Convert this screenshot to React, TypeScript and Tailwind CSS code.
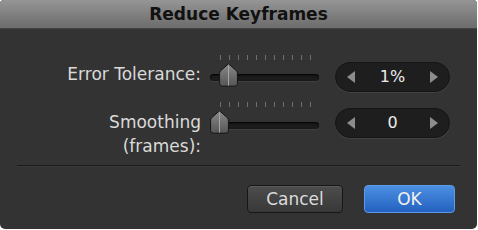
const font = { fontFamily: '"DejaVu Sans", Verdana, sans-serif' };

const ticks = Array.from({ length: 11 }, (_, i) => i);

function Thumb() {
  return (
    <svg width="19" height="24" viewBox="0 0 19 24">
      <defs>
        <linearGradient id="tg" x1="0" y1="0" x2="0" y2="1">
          <stop offset="0" stopColor="#8a8a8a" />
          <stop offset="1" stopColor="#555" />
        </linearGradient>
      </defs>
      <path d="M9.5 0.8 L17.6 8 Q18.4 8.8 18.4 10 L18.4 20.5 Q18.4 23.2 15.8 23.2 L3.2 23.2 Q0.6 23.2 0.6 20.5 L0.6 10 Q0.6 8.8 1.4 8 Z" fill="url(#tg)" stroke="#151515" strokeWidth="1" />
      <line x1="9.5" y1="2.5" x2="9.5" y2="22.5" stroke="#a5a5a5" strokeWidth="1" />
    </svg>
  );
}

function Slider({ tickTop, thumbTop, trackTop, thumbX }: { tickTop: number; thumbTop: number; trackTop: number; thumbX: number }) {
  return (
    <div className="relative w-[109px] h-[40px]">
      {ticks.map((i) => (
        <div key={i} className="absolute w-px h-[5px] bg-[#6f6f6f]" style={{ left: 10 + i * 9, top: tickTop }} />
      ))}
      <div className="absolute left-0 right-0 h-[7px] rounded-full bg-[#1b1b1b] shadow-[inset_0_1px_2px_#000,0_1px_0_#3f3f3f]" style={{ top: trackTop }} />
      <div className="absolute" style={{ left: thumbX, top: thumbTop }}>
        <Thumb />
      </div>
    </div>
  );
}

function Stepper({ value }: { value: string }) {
  return (
    <div className="flex items-center w-[115px] h-[30px] rounded-full bg-[#1e1e1e] border border-[#141414] shadow-[0_1px_0_#424242] px-[11px]">
      <div className="w-0 h-0 border-y-[6px] border-y-transparent border-r-[8px] border-r-[#8c8c8c]" />
      <div className="flex-1 text-center text-[16px] text-[#ececec] leading-none">{value}</div>
      <div className="w-0 h-0 border-y-[6px] border-y-transparent border-l-[8px] border-l-[#8c8c8c]" />
    </div>
  );
}

export default function App() {
  return (
    <div className="w-[478px] h-[230px] bg-white" style={font}>
      <div className="w-[477px] h-[229px] bg-[#333333] rounded-t-[4px] rounded-b-[5px] overflow-hidden flex flex-col">
        <div className="h-[29px] bg-gradient-to-b from-[#959595] to-[#6c6c6c] flex items-center justify-center border-b border-[#444]">
          <span className="text-[17px] font-bold text-[#111] leading-none">Reduce Keyframes</span>
        </div>
        <div className="flex flex-col pt-[24px]">
          <div className="flex items-start h-[40px]">
            <div className="w-[201px] mt-[11px] text-right text-[17px] leading-[20px] text-[#dadada]">Error Tolerance:</div>
            <div className="ml-[9px]">
              <Slider tickTop={2} thumbTop={10} trackTop={21} thumbX={9} />
            </div>
            <div className="ml-[16px] mt-[9px]">
              <Stepper value="1%" />
            </div>
          </div>
          <div className="flex items-start mt-[6px]">
            <div className="w-[201px] mt-[11px] text-right text-[17px] leading-[24px] text-[#dadada]">
              Smoothing
              <br />
              (frames):
            </div>
            <div className="ml-[9px]">
              <Slider tickTop={3} thumbTop={11} trackTop={23} thumbX={0} />
            </div>
            <div className="ml-[16px] mt-[9px]">
              <Stepper value="0" />
            </div>
          </div>
          <div className="mx-[17px] mt-[7px] h-px bg-[#1b1b1b] shadow-[0_1px_0_#3a3a3a]" />
          <div className="flex justify-end gap-[21px] pr-[22px] mt-[19px]">
            <button className="w-[96px] h-[28px] rounded-[4px] border border-[#171717] bg-gradient-to-b from-[#4d4d4d] to-[#383838] shadow-[inset_0_1px_0_#5a5a5a] text-[17px] text-[#dcdcdc] leading-none">
              Cancel
            </button>
            <button className="w-[91px] h-[28px] rounded-[4px] border border-[#5d9be8] bg-gradient-to-b from-[#4b8fe2] to-[#2461c0] text-[17px] text-[#f0f0f0] leading-none">
              OK
            </button>
          </div>
        </div>
      </div>
    </div>
  );
}
